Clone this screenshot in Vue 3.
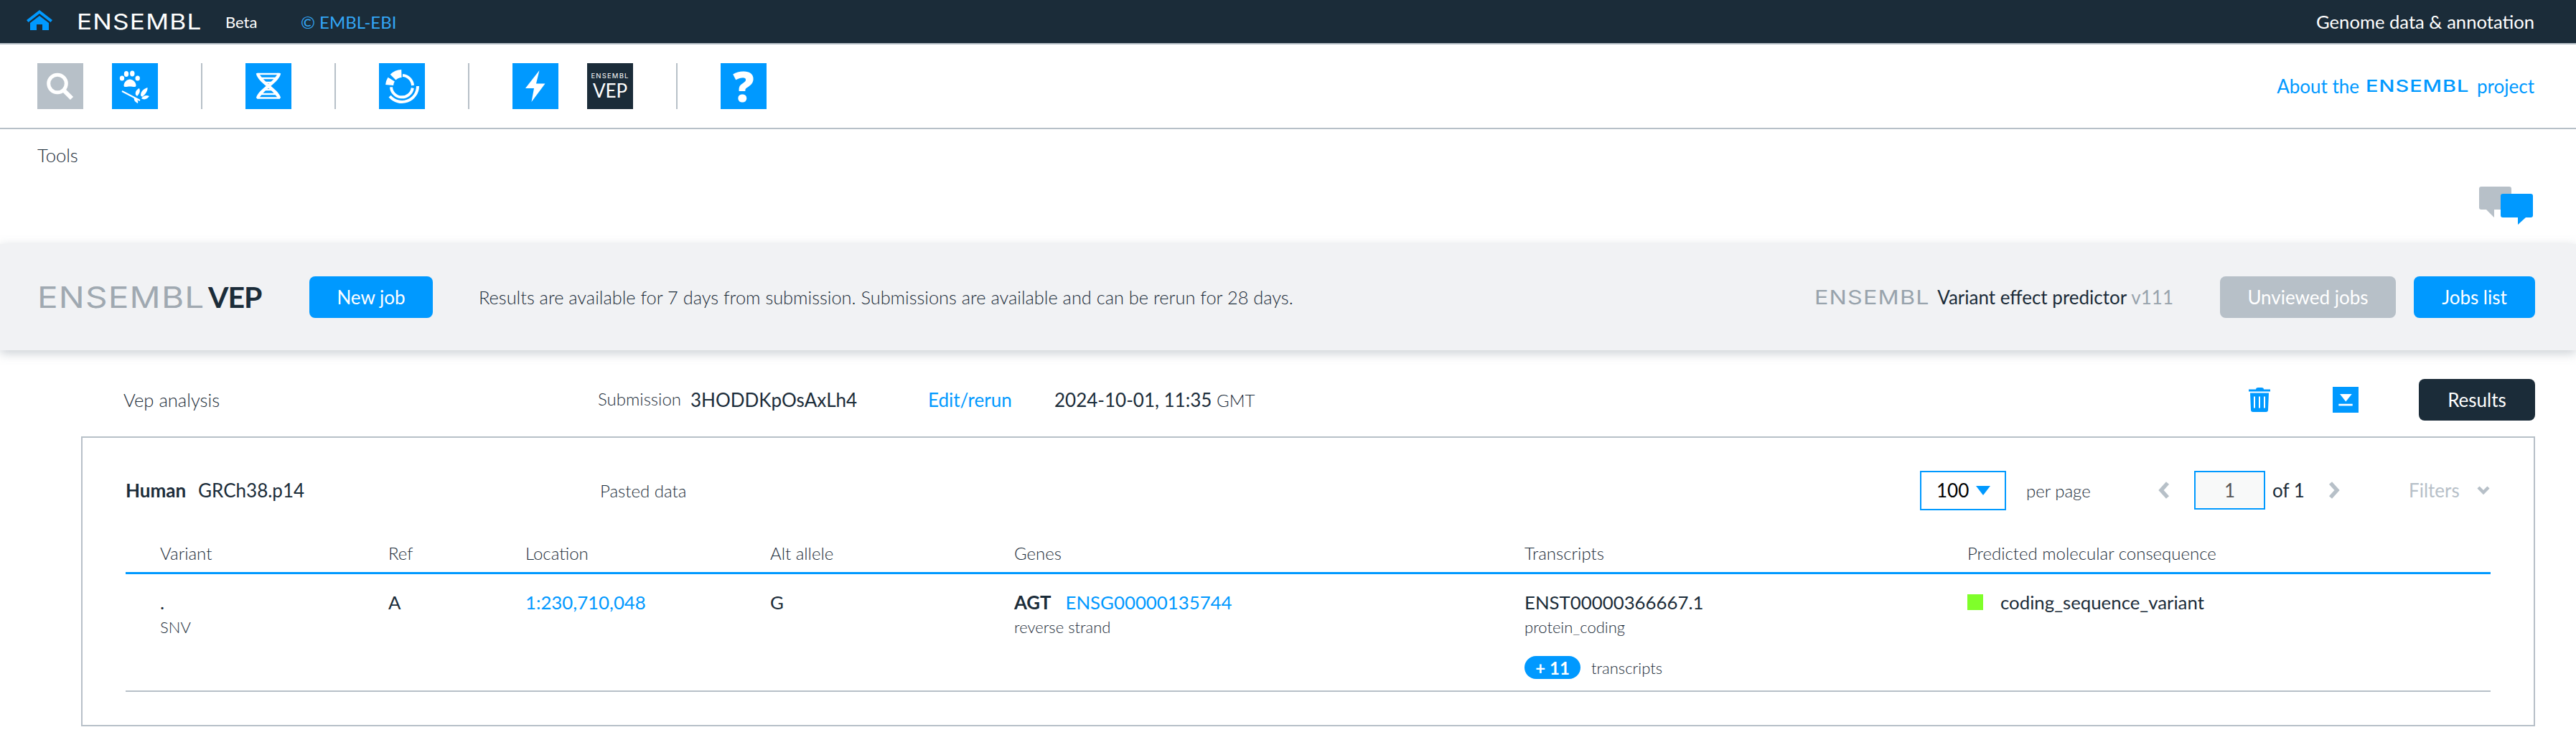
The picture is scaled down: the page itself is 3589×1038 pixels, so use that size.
<script setup>
const navGroups = [
  ['search', 'species'],
  ['dna'],
  ['rings'],
  ['bolt', 'vep'],
  ['help']
]

const columns = ['Variant', 'Ref', 'Location', 'Alt allele', 'Genes', 'Transcripts', 'Predicted molecular consequence']
</script>

<template>
  <div class="page">
    <header class="topbar">
      <div class="topbar-left">
        <svg class="home" viewBox="0 0 36 28">
          <path d="M18 0 L36 14 L33.5 17 L18 5 L2.5 17 L0 14 Z" />
          <path d="M5 18 L18 8 L31 18 V28 H22 V20 H14 V28 H5 Z" />
        </svg>
        <span class="wordmark">ENSEMBL</span>
        <span class="beta">Beta</span>
        <span class="copy">© EMBL-EBI</span>
      </div>
      <div class="tagline">Genome data &amp; annotation</div>
    </header>

    <nav class="toolbar">
      <div class="launchers">
        <div v-for="(group, i) in navGroups" :key="i" class="group">
          <div v-for="name in group" :key="name" class="tile" :class="name">
            <svg v-if="name === 'search'" viewBox="0 0 64 64">
              <circle cx="28" cy="28.5" r="12.3" fill="none" stroke="#fff" stroke-width="5" />
              <path d="M37 38 L48 49" stroke="#fff" stroke-width="6" fill="none" />
            </svg>
            <svg v-else-if="name === 'species'" viewBox="0 0 64 64" fill="#fff">
              <ellipse cx="14" cy="21" rx="3.2" ry="3.6" />
              <ellipse cx="20" cy="15" rx="3.2" ry="4" />
              <ellipse cx="28.3" cy="14.5" rx="3.2" ry="4" />
              <ellipse cx="35.7" cy="21" rx="3.2" ry="3.6" />
              <path d="M16.5 31 C17 26 21 22.5 25 22.5 C29 22.5 33.5 26.5 33.5 31 C33.5 34.5 29 32.5 25 32.5 C21 32.5 16.5 34.5 16.5 31 Z" />
              <path d="M14 39 L39 52" stroke="#fff" stroke-width="2" />
              <path d="M33 44 C32 40 34 37 38 35 C40 39 38 43 35 46 Z" />
              <path d="M40 45 C40 39 44 36 49.5 34 C50 39 46 44 42 47 Z" />
              <path d="M41 49 C44 45 48 44 52 46 C49 50 45 52 41 49 Z" />
              <path d="M31 48 C30 51 32 54 36 56 C37 53 35 49 31 48 Z" />
            </svg>
            <svg v-else-if="name === 'dna'" viewBox="0 0 64 64" fill="none" stroke="#fff">
              <path d="M17 14 C19 26 44 37 47 49" stroke-width="4.5" />
              <path d="M47 14 C45 26 20 37 17 49" stroke-width="4.5" />
              <path d="M16 15 H48 M21 21 H43 M25 27 H39 M25 37 H39 M21 43 H43 M16 48.5 H48" stroke-width="2.6" />
            </svg>
            <svg v-else-if="name === 'rings'" viewBox="0 0 64 64" fill="none" stroke="#fff">
              <path d="M31.4 14.5 A17.5 17.5 0 0 0 19.6 19.6" stroke-width="11" />
              <path d="M17.2 22.7 A17.5 17.5 0 0 0 14.6 30.5" stroke-width="11" />
              <path d="M33 17 A15 15 0 0 1 47 31" stroke-width="4" />
              <path d="M46.8 34.6 A15 15 0 0 1 17 33.3" stroke-width="4" />
              <path d="M54 32 A22 22 0 0 1 15.1 46.1" stroke-width="4" />
            </svg>
            <svg v-else-if="name === 'bolt'" viewBox="0 0 64 64" fill="#fff">
              <path d="M37.5 10 L18 35 H30 L26.5 54 L45.5 28.5 H33 Z" />
            </svg>
            <div v-else-if="name === 'vep'" class="vep-tile">
              <span class="vep-small">ENSEMBL</span>
              <span class="vep-big">VEP</span>
            </div>
            <span v-else class="qmark">?</span>
          </div>
        </div>
      </div>
      <div class="about">
        About the <span class="about-brand">ENSEMBL</span> project
      </div>
    </nav>

    <section class="crumbs">
      <span class="crumb">Tools</span>
      <svg class="chat" viewBox="0 0 75 53">
        <path d="M3 0 H42 Q45 0 45 3 V29 Q45 32 42 32 H21 V43 L10 32 H3 Q0 32 0 29 V3 Q0 0 3 0 Z" fill="#b7c0c8" />
        <path d="M33 10 H72 Q75 10 75 13 V40 Q75 43 72 43 H65 L54 53 V43 H33 Q30 43 30 40 V13 Q30 10 33 10 Z" fill="#0099ff" />
      </svg>
    </section>

    <section class="app-bar">
      <div class="app-left">
        <div class="app-logo"><span class="logo-grey">ENSEMBL</span><span class="logo-dark">VEP</span></div>
        <button class="btn btn-new">New job</button>
        <span class="notice">Results are available for 7 days from submission. Submissions are available and can be rerun for 28 days.</span>
      </div>
      <div class="app-right">
        <span class="vep-name"><span class="name-brand">ENSEMBL</span>Variant effect predictor <span class="version">v111</span></span>
        <button class="btn btn-grey">Unviewed jobs</button>
        <button class="btn btn-list">Jobs list</button>
      </div>
    </section>

    <section class="job-row">
      <span class="job-title">Vep analysis</span>
      <span class="job-sub"><span class="muted">Submission</span><span class="job-id">3HODDKpOsAxLh4</span></span>
      <span class="job-edit">Edit/rerun</span>
      <span class="job-date">2024-10-01, 11:35 <span class="gmt">GMT</span></span>
      <div class="job-actions">
        <svg class="trash" viewBox="0 0 30 34" fill="#0099ff">
          <path d="M10 2.5 Q10 0 13 0 H18 Q21 0 21 2.5 H30 V5.5 H0 V2.5 Z" />
          <path d="M2 7.5 H28 L27 31 Q27 34 24 34 H6 Q3 34 3 31 Z" />
          <path d="M8 12.5 V28.5 M15 12.5 V28.5 M22 12.5 V28.5" stroke="#fff" stroke-width="2" />
        </svg>
        <svg class="download" viewBox="0 0 36 36">
          <rect width="36" height="36" fill="#0099ff" />
          <path d="M10 10 H26.7 L18.3 20.5 Z" fill="#fff" />
          <rect x="8.3" y="23.7" width="19.4" height="2.7" fill="#fff" />
        </svg>
        <button class="btn btn-results">Results</button>
      </div>
    </section>

    <section class="panel">
      <div class="panel-head">
        <div class="assembly"><strong>Human</strong><span>GRCh38.p14</span></div>
        <span class="pasted">Pasted data</span>
        <div class="pager">
          <div class="per-box">100<i class="caret"></i></div>
          <span class="per-label">per page</span>
          <svg class="chev" viewBox="0 0 18 24"><path d="M14 2 L5 12 L14 22" /></svg>
          <div class="page-box">1</div>
          <span class="of">of 1</span>
          <svg class="chev" viewBox="0 0 18 24"><path d="M4 2 L13 12 L4 22" /></svg>
          <span class="filters">Filters</span>
          <svg class="filter-chev" viewBox="0 0 20 14"><path d="M3 3 L10 10 L17 3" /></svg>
        </div>
      </div>

      <div class="table">
        <div class="row head">
          <div v-for="c in columns" :key="c">{{ c }}</div>
        </div>
        <div class="row body">
          <div>
            <div class="val">.</div>
            <div class="sub">SNV</div>
          </div>
          <div class="val">A</div>
          <div class="val link">1:230,710,048</div>
          <div class="val">G</div>
          <div>
            <div class="val"><strong class="gene">AGT</strong><span class="link">ENSG00000135744</span></div>
            <div class="sub">reverse strand</div>
          </div>
          <div>
            <div class="val tx">ENST00000366667.1</div>
            <div class="sub">protein_coding</div>
            <div class="more"><span class="pill">+ 11</span><span class="more-label">transcripts</span></div>
          </div>
          <div class="val conseq"><i class="swatch"></i>coding_sequence_variant</div>
        </div>
      </div>
    </section>
  </div>
</template>

<style>
html,
body {
  margin: 0;
  background: #fff;
}
</style>

<style scoped>
.page {
  width: 3589px;
  height: 1038px;
  overflow: hidden;
  font-family: Lato, "Liberation Sans", sans-serif;
  font-size: 25.6px;
  font-weight: 300;
  color: #1b2c39;
}
.topbar {
  height: 60px;
  background: #1b2c39;
  border-bottom: 2px solid #b7c0c8;
  display: flex;
  align-items: center;
  justify-content: space-between;
  padding: 0 58px 0 37px;
}
.topbar-left {
  display: flex;
  align-items: center;
}
.home {
  width: 36px;
  height: 28px;
  fill: #0099ff;
  margin-right: 34px;
  margin-bottom: 4px;
}
.wordmark {
  display: inline-block;
  width: 175px;
  white-space: nowrap;
  transform: scaleX(1.174);
  transform-origin: left center;
  font-family: Inter, sans-serif;
  font-weight: 400;
  font-size: 30px;
  letter-spacing: 1px;
  color: #fff;
  margin-right: 32px;
}
.beta {
  width: 43px;
  color: #fff;
  font-size: 22px;
  font-weight: 400;
  margin-right: 62px;
}
.copy {
  color: #33a6f5;
  font-size: 24px;
  font-weight: 400;
}
.tagline {
  color: #fff;
  font-size: 25.6px;
  font-weight: 400;
}
.toolbar {
  height: 116px;
  border-bottom: 2px solid #b7c0c8;
  display: flex;
  align-items: center;
  justify-content: space-between;
  padding: 0 58px 0 52px;
}
.launchers {
  display: flex;
}
.group {
  display: flex;
  gap: 40px;
  padding-right: 60px;
  margin-right: 60px;
  border-right: 2px solid #b7c0c8;
}
.group:last-child {
  border-right: none;
}
.tile {
  width: 64px;
  height: 64px;
  background: #0099ff;
  display: flex;
  align-items: center;
  justify-content: center;
}
.tile svg {
  width: 64px;
  height: 64px;
  display: block;
}
.tile.search {
  background: #b7c0c8;
}
.tile.vep {
  background: #1b2c39;
}
.vep-tile {
  display: flex;
  flex-direction: column;
  align-items: center;
  color: #fff;
  font-weight: 400;
}
.vep-small {
  font-family: Inter, sans-serif;
  font-size: 9.5px;
  letter-spacing: 1.2px;
  line-height: 12px;
}
.vep-big {
  font-size: 26px;
  line-height: 28px;
}
.qmark {
  color: #fff;
  font-family: "Open Sans", sans-serif;
  font-weight: 800;
  font-size: 58px;
  line-height: 64px;
}
.about {
  color: #0099ff;
  font-weight: 400;
  font-size: 26px;
  display: flex;
  align-items: center;
  gap: 9px;
}
.about-brand {
  display: inline-block;
  width: 146px;
  white-space: nowrap;
  transform: scaleX(1.26);
  transform-origin: left center;
  font-family: Inter, sans-serif;
  font-size: 23px;
  letter-spacing: 0.8px;
  font-weight: 500;
}
.crumbs {
  height: 160px;
  padding: 23px 60px 0 52px;
  box-sizing: border-box;
  display: flex;
  justify-content: space-between;
  align-items: flex-start;
}
.crumb {
  line-height: 26px;
}
.chat {
  width: 75px;
  height: 53px;
  margin-top: 57px;
}
.app-bar {
  height: 148px;
  background: #f1f2f4;
  box-shadow: 0 4px 14px rgba(100, 115, 130, 0.35);
  display: flex;
  align-items: center;
  justify-content: space-between;
  padding: 0 57px 0 52px;
  position: relative;
}
.app-left,
.app-right {
  display: flex;
  align-items: center;
}
.app-logo {
  font-size: 41px;
  line-height: 42px;
  display: flex;
  margin-right: 65px;
  width: 314px;
}
.logo-grey {
  display: inline-block;
  width: 238px;
  white-space: nowrap;
  transform: scaleX(1.164);
  transform-origin: left center;
  font-family: Inter, sans-serif;
  font-weight: 400;
  letter-spacing: 1px;
  color: #a0a9b1;
}
.logo-dark {
  font-weight: 700;
  letter-spacing: -1px;
  color: #1b2c39;
}
.btn {
  border: none;
  border-radius: 8px;
  height: 58px;
  font-family: Lato, sans-serif;
  font-size: 26px;
  font-weight: 400;
  color: #fff;
  background: #0099ff;
  padding: 0;
}
.btn-new {
  width: 172px;
  margin-right: 64px;
}
.notice {
  font-size: 25.4px;
}
.vep-name {
  margin-right: 65px;
  font-size: 26px;
  font-weight: 400;
  display: flex;
  align-items: center;
  white-space: pre;
}
.name-brand {
  display: inline-block;
  width: 171px;
  white-space: nowrap;
  transform: scaleX(1.175);
  transform-origin: left center;
  font-family: Inter, sans-serif;
  font-size: 27.5px;
  font-weight: 400;
  letter-spacing: 1px;
  color: #98a3ac;
}
.version {
  color: #98a3ac;
  font-weight: 400;
}
.btn-grey {
  width: 245px;
  background: #b7c0c8;
  margin-right: 25px;
}
.btn-list {
  width: 169px;
}
.job-row {
  display: flex;
  align-items: center;
  box-sizing: border-box;
  height: 120px;
  padding: 18px 57px 0 172px;
}
.job-title {
  width: 661px;
}
.job-sub {
  width: 460px;
  display: flex;
  gap: 13px;
  font-size: 26px;
}
.muted {
  font-size: 24px;
  font-weight: 300;
}
.job-id {
  font-weight: 400;
}
.job-edit {
  width: 176px;
  color: #0099ff;
  font-size: 26px;
  font-weight: 400;
}
.job-date {
  font-size: 26px;
  font-weight: 400;
}
.gmt {
  font-weight: 300;
  font-size: 24px;
}
.job-actions {
  margin-left: auto;
  display: flex;
  align-items: center;
}
.trash {
  width: 30px;
  height: 34px;
  margin-right: 87px;
}
.download {
  width: 36px;
  height: 36px;
  margin-right: 84px;
}
.btn-results {
  width: 162px;
  background: #1b2c39;
}
.panel {
  margin: 0 57px 0 113px;
  height: 404px;
  box-sizing: border-box;
  border: 2px solid #b7c0c8;
  padding: 0 60px;
}
.panel-head {
  height: 146px;
  display: flex;
  align-items: center;
}
.assembly {
  width: 661px;
  display: flex;
  gap: 17px;
  font-size: 26px;
  font-weight: 400;
}
.assembly strong {
  font-weight: 700;
}
.pasted {
  font-size: 24px;
}
.pager {
  margin-left: auto;
  display: flex;
  align-items: center;
  font-size: 26px;
}
.per-box {
  width: 120px;
  height: 55px;
  box-sizing: border-box;
  border: 2px solid #0099ff;
  color: #000;
  font-weight: 400;
  display: flex;
  align-items: center;
  padding-left: 21px;
  margin-right: 28px;
}
.caret {
  width: 0;
  height: 0;
  border-left: 10px solid transparent;
  border-right: 10px solid transparent;
  border-top: 13px solid #0099ff;
  margin-left: 10px;
}
.per-label {
  font-size: 24px;
  width: 183px;
}
.chev {
  width: 18px;
  height: 24px;
  fill: none;
  stroke: #b7c0c8;
  stroke-width: 5.5;
}
.page-box {
  width: 99px;
  height: 54px;
  box-sizing: border-box;
  border: 2px solid #0099ff;
  background: #f8f9f9;
  color: #555;
  font-weight: 400;
  display: flex;
  align-items: center;
  justify-content: center;
  margin: 0 10px 0 33px;
}
.of {
  font-weight: 400;
  width: 77px;
}
.filters {
  color: #b7c0c8;
  font-weight: 400;
  margin-left: 95px;
  width: 94px;
}
.filter-chev {
  width: 20px;
  height: 14px;
  fill: none;
  stroke: #b7c0c8;
  stroke-width: 4.5;
}
.row {
  display: grid;
  grid-template-columns: 318px 191px 341px 340px 711px 617px 1fr;
  padding-left: 48px;
}
.head {
  height: 41px;
  border-bottom: 3px solid #0099ff;
  font-size: 24px;
  line-height: 30px;
}
.body {
  height: 164px;
  box-sizing: border-box;
  padding-top: 23px;
  border-bottom: 2px solid #b7c0c8;
}
.val {
  line-height: 32px;
  font-size: 25.8px;
  font-weight: 400;
}
.sub {
  font-size: 22px;
  line-height: 26px;
  margin-top: 6px;
}
.link {
  color: #0099ff;
}
.gene {
  font-weight: 700;
  margin-right: 20px;
}
.more {
  display: flex;
  align-items: center;
  gap: 15px;
  margin-top: 27px;
}
.pill {
  width: 78px;
  height: 32px;
  border-radius: 16px;
  background: #0099ff;
  color: #fff;
  font-size: 24px;
  font-weight: 700;
  display: flex;
  align-items: center;
  justify-content: center;
}
.more-label {
  font-size: 22px;
}
.conseq {
  display: flex;
  align-items: center;
  gap: 24px;
  height: 32px;
}
.swatch {
  width: 22px;
  height: 22px;
  background: #7fff2a;
}
</style>
